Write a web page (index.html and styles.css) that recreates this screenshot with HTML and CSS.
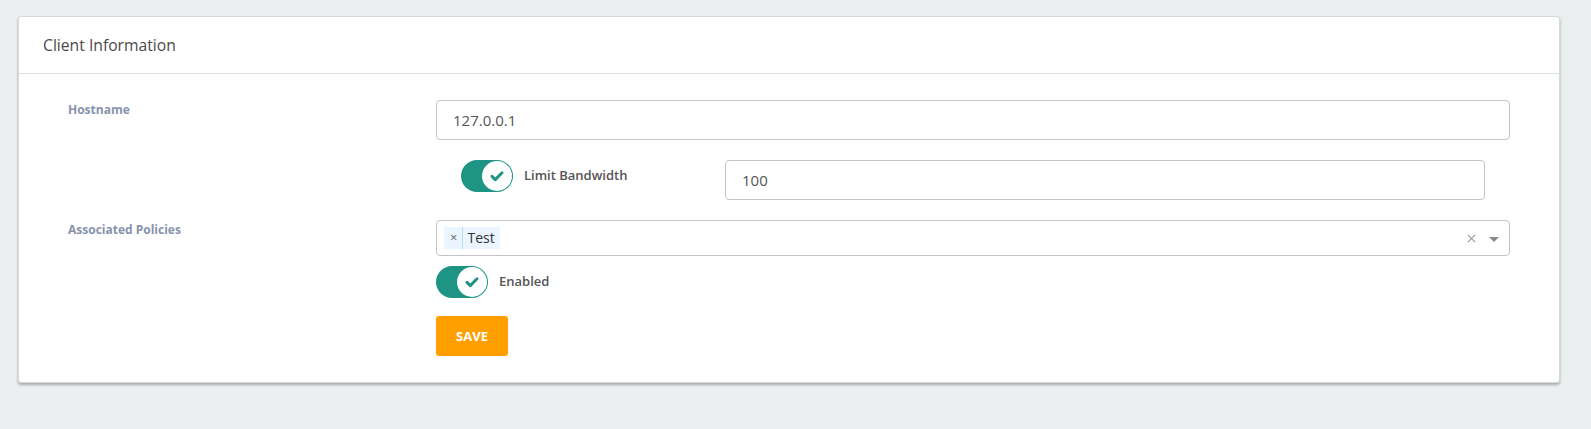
FILE: index.html
```html
<!DOCTYPE html>
<html>
<head>
<meta charset="utf-8">
<link rel="stylesheet" href="styles.css">
</head>
<body>
<div class="card">
  <div class="card-header">Client Information</div>
  <div class="card-body">
    <div class="form-row">
      <label class="field-label">Hostname</label>
      <div class="field">
        <div class="input">127.0.0.1</div>
        <div class="sub-row">
          <div class="switch-wrap">
            <span class="switch"><span class="knob"><svg viewBox="0 0 16 16" width="16" height="16"><path d="M3 8.4l3.3 3.2 6.7-6.8" fill="none" stroke="#1e9484" stroke-width="3" stroke-linecap="round" stroke-linejoin="round"/></svg></span></span>
            <span class="switch-label">Limit Bandwidth</span>
          </div>
          <div class="input">100</div>
        </div>
      </div>
    </div>
    <div class="form-row">
      <label class="field-label">Associated Policies</label>
      <div class="field">
        <div class="select">
          <span class="tag"><span class="tag-x">×</span><span class="tag-text">Test</span></span>
          <span class="select-end">
            <svg class="clear" viewBox="0 0 10 10" width="9" height="9"><path d="M1 1l8 8M9 1l-8 8" stroke="#999" stroke-width="1.3"/></svg>
            <span class="caret"></span>
          </span>
        </div>
        <div class="switch-wrap enabled">
          <span class="switch"><span class="knob"><svg viewBox="0 0 16 16" width="16" height="16"><path d="M3 8.4l3.3 3.2 6.7-6.8" fill="none" stroke="#1e9484" stroke-width="3" stroke-linecap="round" stroke-linejoin="round"/></svg></span></span>
          <span class="switch-label">Enabled</span>
        </div>
        <button class="btn-save">SAVE</button>
      </div>
    </div>
  </div>
</div>
</body>
</html>
```

FILE: styles.css
```css
html, body {
  margin: 0;
  padding: 0;
}
body {
  background: #ebeff0;
  font-family: "Open Sans", "Noto Sans", sans-serif;
  color: #555;
  padding: 16px 31px 0 18px;
  height: 429px;
  box-sizing: border-box;
}
.card {
  background: #fff;
  border: 1px solid #d6d9da;
  border-radius: 3px;
  box-shadow: 0 2px 3px rgba(0, 0, 0, 0.28);
  width: 1542px;
  box-sizing: border-box;
}
.card-header {
  height: 57px;
  border-bottom: 1px solid #dcdfe0;
  box-sizing: border-box;
  padding: 0 24px;
  display: flex;
  align-items: center;
  font-size: 15.7px;
  color: #4a4a4a;
}
.card-body {
  padding: 26px 49px 26px 49px;
  display: flex;
  flex-direction: column;
  gap: 20px;
}
.form-row {
  display: grid;
  grid-template-columns: 368px 1fr;
}
.field-label {
  font-size: 12px;
  font-weight: 700;
  color: #8892ad;
  padding-top: 2px;
  line-height: 16px;
}
.field {
  display: flex;
  flex-direction: column;
  align-items: flex-start;
}
.input {
  width: 100%;
  box-sizing: border-box;
  height: 40px;
  border: 1px solid #c4c4c4;
  border-radius: 4px;
  padding: 0 16px;
  display: flex;
  align-items: center;
  font-size: 15px;
  color: #555;
}
.sub-row {
  width: 100%;
  box-sizing: border-box;
  padding: 0 25px;
  margin-top: 20px;
  display: grid;
  grid-template-columns: 264px 1fr;
  align-items: start;
}
.switch-wrap {
  display: flex;
  align-items: center;
  gap: 11px;
}
.switch {
  width: 52px;
  height: 32px;
  border-radius: 16px;
  background: #1e9484;
  box-sizing: border-box;
  padding: 1px;
  display: flex;
  justify-content: flex-end;
}
.knob {
  width: 30px;
  height: 30px;
  border-radius: 50%;
  background: #fff;
  display: flex;
  align-items: center;
  justify-content: center;
}
.switch-label {
  font-size: 13px;
  font-weight: 600;
  color: #555;
  margin-top: -2px;
}
.select {
  width: 100%;
  box-sizing: border-box;
  height: 36px;
  border: 1px solid #c4c4c4;
  border-radius: 4px;
  padding: 0 7px;
  display: flex;
  align-items: center;
  justify-content: space-between;
}
.tag {
  display: flex;
  align-items: center;
  height: 22px;
  background: #ebf5ff;
  border-radius: 2px;
  font-size: 14px;
  color: #333;
}
.tag-x {
  padding: 0 5px 0 6px;
  font-size: 13px;
  color: #666;
  border-right: 1px solid #b9dcf7;
  height: 22px;
  line-height: 21px;
}
.tag-text {
  padding: 0 5px 0 4px;
  line-height: 22px;
}
.select-end {
  display: flex;
  align-items: center;
  gap: 13px;
  padding-right: 3px;
}
.caret {
  width: 0;
  height: 0;
  border-left: 5px solid transparent;
  border-right: 5px solid transparent;
  border-top: 5px solid #888;
  margin-top: 2px;
}
.switch-wrap.enabled {
  margin-top: 10px;
}
.btn-save {
  margin-top: 18px;
  width: 72px;
  height: 40px;
  border: none;
  border-radius: 3px;
  background: #ffa000;
  color: #fff;
  font-family: "Open Sans", "Noto Sans", sans-serif;
  font-weight: 700;
  font-size: 13px;
  padding: 0;
}
```
